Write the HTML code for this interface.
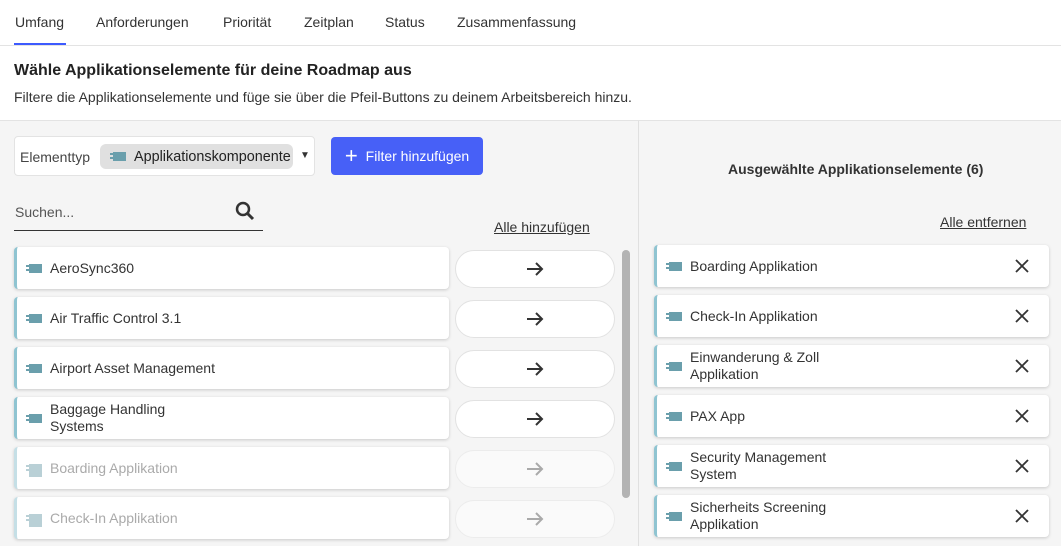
<!DOCTYPE html>
<html><head><meta charset="utf-8"><style>
*{box-sizing:border-box;margin:0;padding:0}
body{width:1061px;height:546px;overflow:hidden;font-family:"Liberation Sans",sans-serif;color:#333;background:#fff;position:relative;font-size:14px}
.abs{position:absolute}
.tab{position:absolute;top:14px;font-size:14px;color:#333}
.item{position:absolute;background:#fff;border-radius:4px;border-left:3px solid #8fc4d1;box-shadow:0 1px 3px rgba(0,0,0,.18);height:42px;display:flex;align-items:center;font-size:14px;color:#333;line-height:17px}
.ic{display:inline-block;width:13px;height:9px;background:#6a9fac;margin:0 8px 0 12px;position:relative;flex:none}
.ic:before{content:"";position:absolute;left:-3px;top:1px;width:3px;height:2px;background:#6a9fac;box-shadow:0 4px 0 #6a9fac}
.dis{color:#aaa}.dis .ic,.dis .ic:before{background:#b9d0d6;box-shadow:0 4px 0 #b9d0d6}
.dis{border-left-color:#c5dfe6}
.btn{position:absolute;left:455px;width:160px;height:38px;border:1px solid #e2e2e2;border-radius:19px;background:#fff;display:flex;align-items:center;justify-content:center}
.x{position:absolute;right:20px;top:14px}
</style></head><body>
<div class="tab" style="left:15px">Umfang</div>
<div class="tab" style="left:96px">Anforderungen</div>
<div class="tab" style="left:223px">Priorität</div>
<div class="tab" style="left:304px">Zeitplan</div>
<div class="tab" style="left:385px">Status</div>
<div class="tab" style="left:457px">Zusammenfassung</div>
<div class="abs" style="left:0;top:45px;width:1061px;height:1px;background:#e3e3e3"></div>
<div class="abs" style="left:14px;top:43px;width:52px;height:2px;background:#3d5afe"></div>
<div class="abs" style="left:14px;top:62px;font-size:16px;font-weight:bold;color:#222">Wähle Applikationselemente für deine Roadmap aus</div>
<div class="abs" style="left:14px;top:89px;font-size:14px;color:#333">Filtere die Applikationselemente und füge sie über die Pfeil-Buttons zu deinem Arbeitsbereich hinzu.</div>
<div class="abs" style="left:0;top:120px;width:1061px;height:426px;background:#f5f5f5;border-top:1px solid #e3e3e3"></div>
<div class="abs" style="left:638px;top:121px;width:1px;height:425px;background:#e0e0e0"></div>
<div class="abs" style="left:14px;top:136px;width:301px;height:40px;background:#fff;border:1px solid #e3e3e3;border-radius:4px"></div>
<div class="abs" style="left:20px;top:149px;font-size:14px;color:#444">Elementtyp</div>
<div class="abs" style="left:100px;top:144px;width:193px;height:25px;background:#e0e0e0;border-radius:6px;display:flex;align-items:center"><span class="ic" style="margin-left:13px"></span><span style="color:#222;font-size:14.4px">Applikationskomponente</span></div>
<div class="abs" style="left:300px;top:150px;font-size:10px;color:#333">▼</div>
<div class="abs" style="left:331px;top:137px;width:152px;height:38px;background:#4760f7;border-radius:4px;color:#fff;display:flex;align-items:center;justify-content:center;font-size:14px"><span style="font-size:22px;margin-right:8px;line-height:20px">+</span>Filter hinzufügen</div>
<div class="abs" style="left:15px;top:204px;color:#555">Suchen...</div>
<svg class="abs" style="left:235px;top:201px" width="20" height="20"><circle cx="8" cy="8" r="6" fill="none" stroke="#333" stroke-width="2.5"/><line x1="12.5" y1="12.5" x2="18" y2="18" stroke="#333" stroke-width="3"/></svg>
<div class="abs" style="left:14px;top:230px;width:249px;height:1px;background:#333"></div>
<div class="abs" style="left:494px;top:219px;text-decoration:underline;color:#333">Alle hinzufügen</div>
<div class="abs" style="left:728px;top:161px;font-weight:bold;font-size:14px;color:#333">Ausgewählte Applikationselemente (6)</div>
<div class="abs" style="left:940px;top:214px;text-decoration:underline;color:#333">Alle entfernen</div>
<div class="abs" style="left:622px;top:250px;width:8px;height:248px;background:#b3b3b3;border-radius:4px"></div>

<div class="item" style="left:14px;top:247px;width:435px"><span class="ic"></span>AeroSync360</div>
<div class="item" style="left:14px;top:297px;width:435px"><span class="ic"></span>Air Traffic Control 3.1</div>
<div class="item" style="left:14px;top:347px;width:435px"><span class="ic"></span>Airport Asset Management</div>
<div class="item" style="left:14px;top:397px;width:435px"><span class="ic"></span>Baggage Handling<br>Systems</div>
<div class="item dis" style="left:14px;top:447px;width:435px"><span class="ic"></span>Boarding Applikation</div>
<div class="item dis" style="left:14px;top:497px;width:435px"><span class="ic"></span>Check-In Applikation</div>

<div class="btn" style="top:250px"><svg width="18" height="16"><path d="M1 8H16M10 2L16 8L10 14" fill="none" stroke="#333" stroke-width="2"/></svg></div>
<div class="btn" style="top:300px"><svg width="18" height="16"><path d="M1 8H16M10 2L16 8L10 14" fill="none" stroke="#333" stroke-width="2"/></svg></div>
<div class="btn" style="top:350px"><svg width="18" height="16"><path d="M1 8H16M10 2L16 8L10 14" fill="none" stroke="#333" stroke-width="2"/></svg></div>
<div class="btn" style="top:400px"><svg width="18" height="16"><path d="M1 8H16M10 2L16 8L10 14" fill="none" stroke="#333" stroke-width="2"/></svg></div>
<div class="btn" style="top:450px;border-color:#ececec;background:#fafafa"><svg width="18" height="16"><path d="M1 8H16M10 2L16 8L10 14" fill="none" stroke="#aaa" stroke-width="2"/></svg></div>
<div class="btn" style="top:500px;border-color:#ececec;background:#fafafa"><svg width="18" height="16"><path d="M1 8H16M10 2L16 8L10 14" fill="none" stroke="#aaa" stroke-width="2"/></svg></div>

<div class="item" style="left:654px;top:245px;width:395px"><span class="ic"></span>Boarding Applikation<svg class="x" width="14" height="14"><path d="M1 1L13 13M13 1L1 13" stroke="#333" stroke-width="1.8"/></svg></div>
<div class="item" style="left:654px;top:295px;width:395px"><span class="ic"></span>Check-In Applikation<svg class="x" width="14" height="14"><path d="M1 1L13 13M13 1L1 13" stroke="#333" stroke-width="1.8"/></svg></div>
<div class="item" style="left:654px;top:345px;width:395px"><span class="ic"></span>Einwanderung &amp; Zoll<br>Applikation<svg class="x" width="14" height="14"><path d="M1 1L13 13M13 1L1 13" stroke="#333" stroke-width="1.8"/></svg></div>
<div class="item" style="left:654px;top:395px;width:395px"><span class="ic"></span>PAX App<svg class="x" width="14" height="14"><path d="M1 1L13 13M13 1L1 13" stroke="#333" stroke-width="1.8"/></svg></div>
<div class="item" style="left:654px;top:445px;width:395px"><span class="ic"></span>Security Management<br>System<svg class="x" width="14" height="14"><path d="M1 1L13 13M13 1L1 13" stroke="#333" stroke-width="1.8"/></svg></div>
<div class="item" style="left:654px;top:495px;width:395px"><span class="ic"></span>Sicherheits Screening<br>Applikation<svg class="x" width="14" height="14"><path d="M1 1L13 13M13 1L1 13" stroke="#333" stroke-width="1.8"/></svg></div>
</body></html>
